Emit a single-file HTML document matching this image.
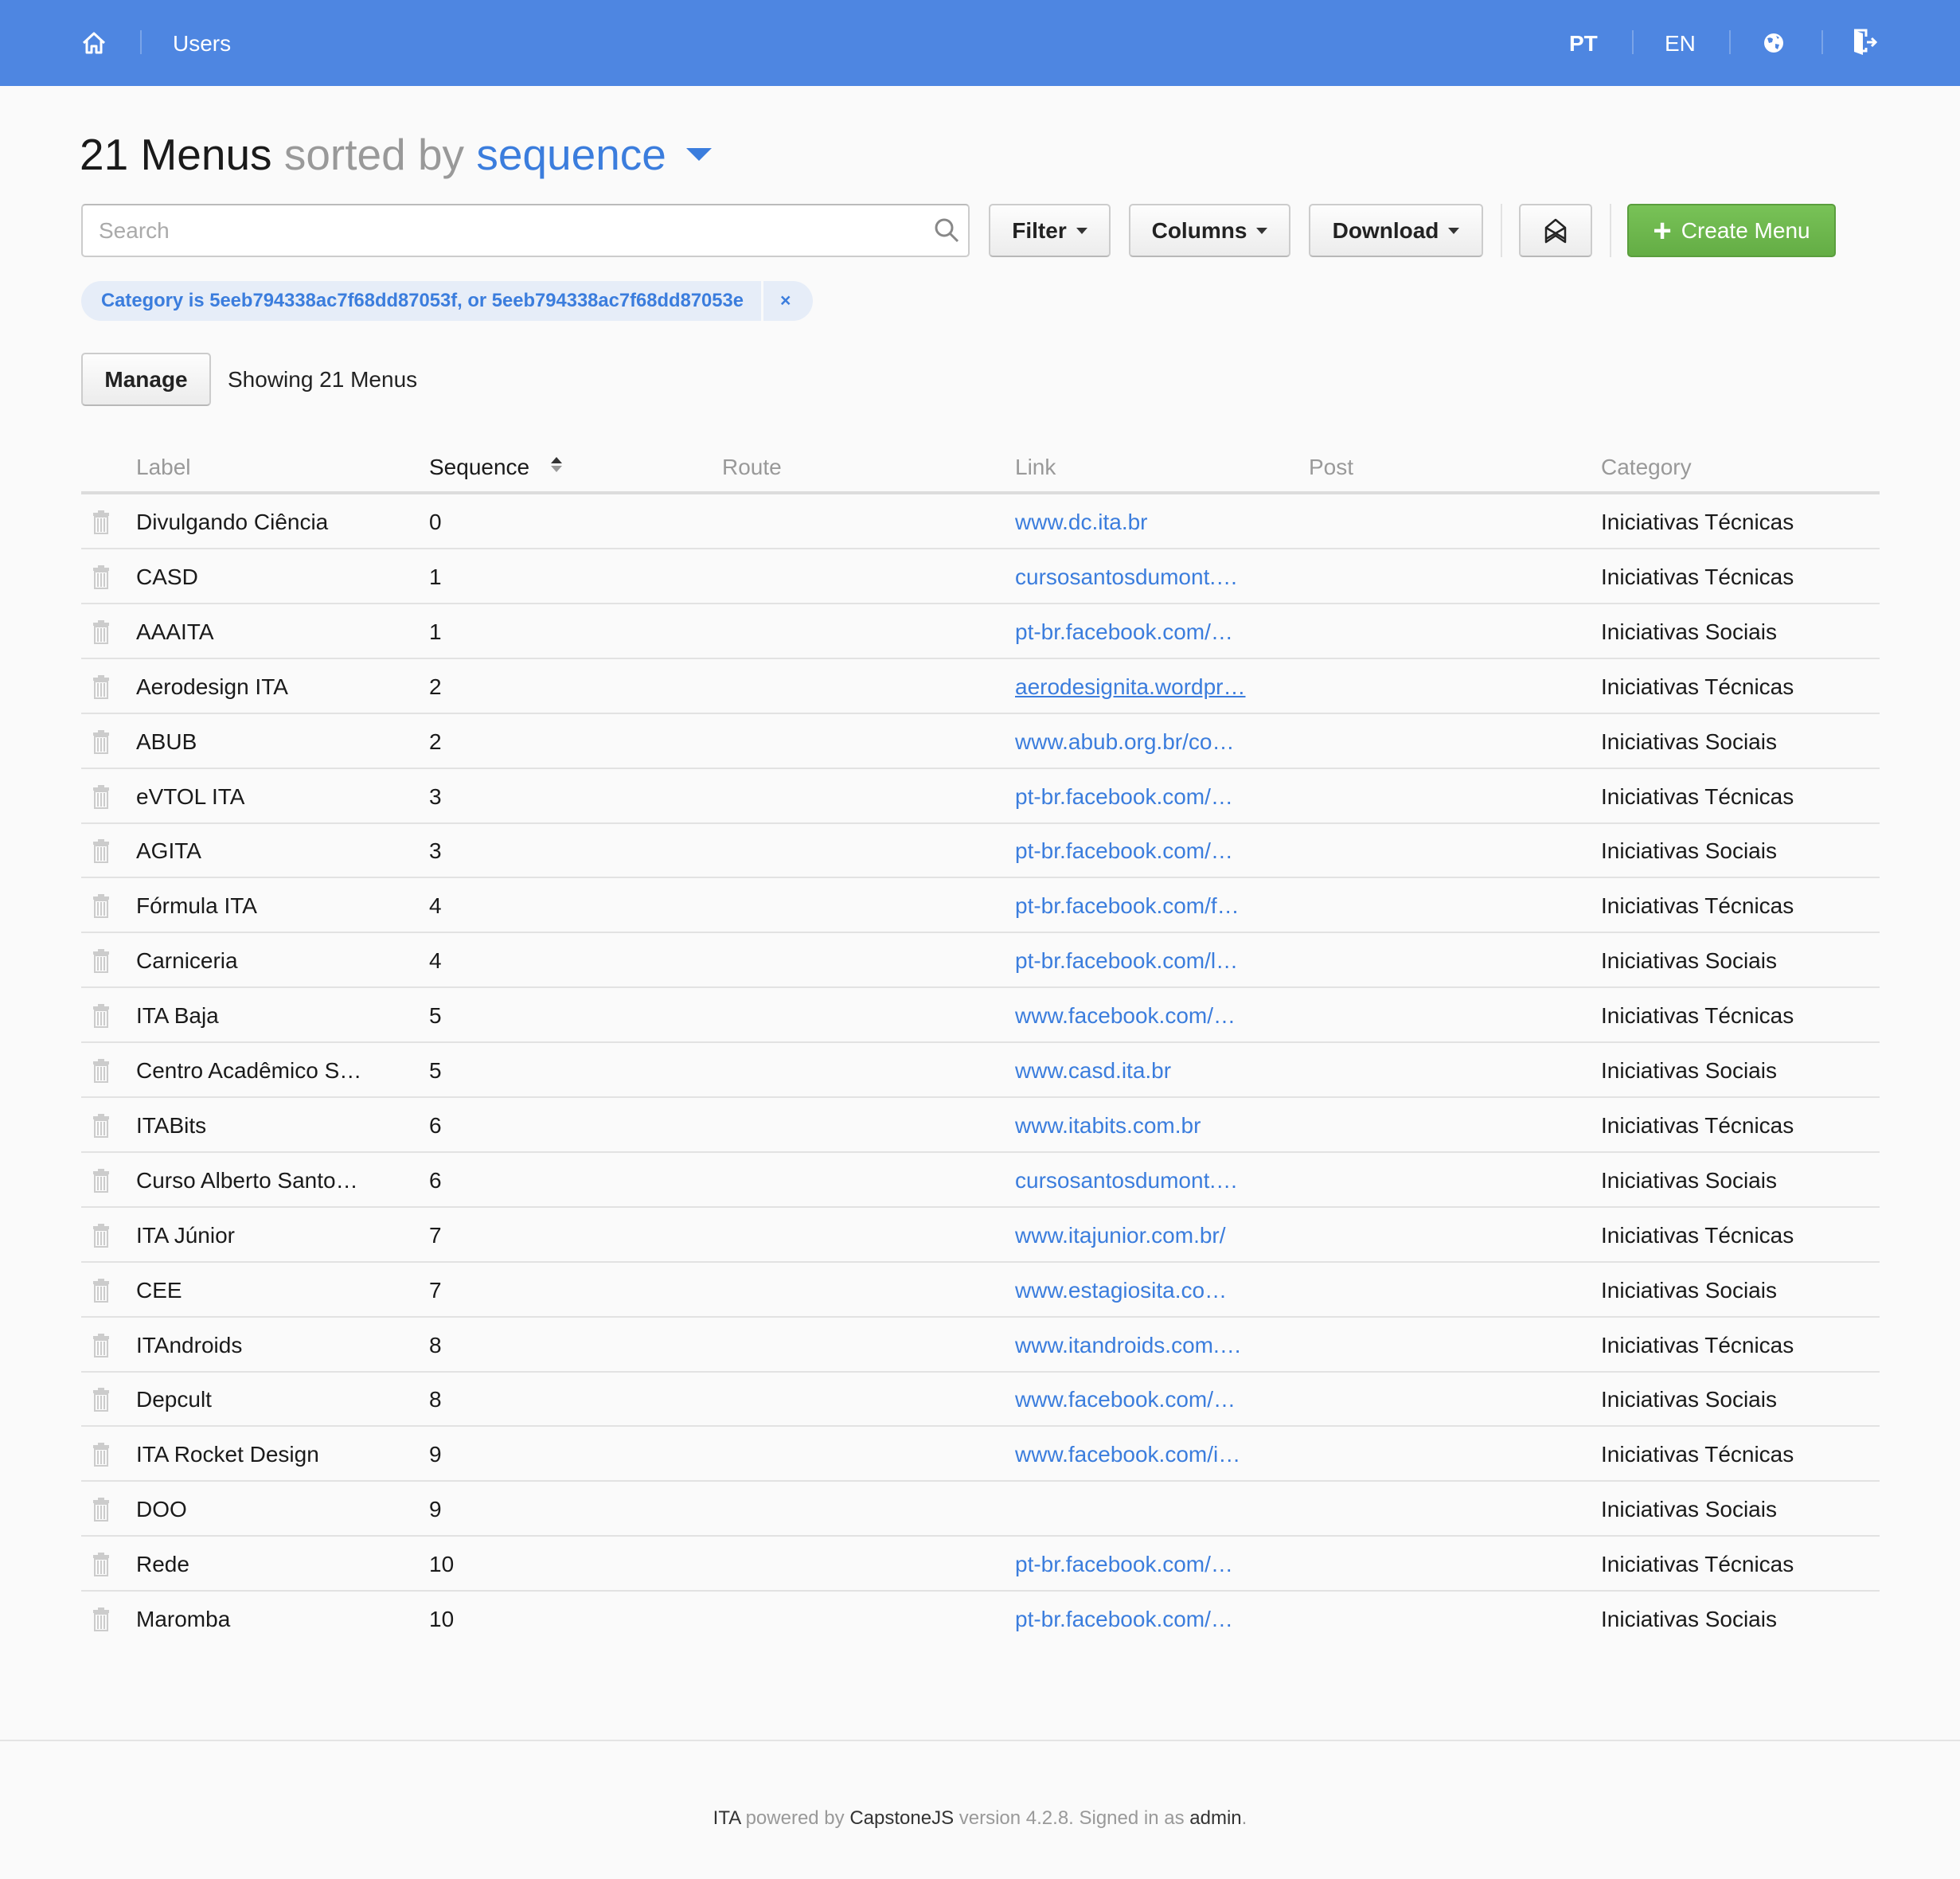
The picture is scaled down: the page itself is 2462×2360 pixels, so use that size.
<!DOCTYPE html>
<html><head><meta charset="utf-8"><style>
*{box-sizing:border-box;margin:0;padding:0}
body{width:2462px;height:2360px;background:#fafafa;font-family:"Liberation Sans",sans-serif;color:#1a1a1a;position:relative;overflow:hidden}
.a{position:absolute}
.hdr{left:0;top:0;width:2462px;height:108px;background:#4e86e1}
.hw{color:#fff;font-size:28px;top:39px}
.sep{top:38px;width:2px;height:30px;background:rgba(255,255,255,.25)}
.btn{top:256px;height:67px;border:2px solid #ccc;border-bottom-color:#b8b8b8;border-radius:5px;background:linear-gradient(#fdfdfd,#ececec);font-size:28px;font-weight:bold;color:#222;display:flex;align-items:center;justify-content:center;gap:12px}
.car{display:inline-block;border-left:7px solid transparent;border-right:7px solid transparent;border-top:8px solid #333}
.row{position:absolute;left:102px;width:2259px;height:69px;border-bottom:2px solid #e2e2e2;font-size:28px}
.row span{position:absolute;top:19px;white-space:nowrap}
.l{left:69px}.s{left:437px}.k{left:1173px;color:#3b7ddd}.c{left:1909px}
.th{top:571px;font-size:28px;color:#999}
</style></head><body>
<div class="a hdr"></div>
<svg class="a" style="left:102px;top:38px" width="32" height="32" viewBox="0 0 32 32"><path d="M3 16 L16 4 L29 16 M7 13 V28 H13 V20 H19 V28 H25 V13" fill="none" stroke="#fff" stroke-width="3" stroke-linejoin="round"/></svg>
<div class="a sep" style="left:176px"></div>
<div class="a hw" style="left:217px">Users</div>
<div class="a hw" style="left:1971px;font-weight:bold">PT</div>
<div class="a sep" style="left:2050px"></div>
<div class="a hw" style="left:2091px">EN</div>
<div class="a sep" style="left:2172px"></div>
<svg class="a" style="left:2215px;top:41px" width="26" height="26" viewBox="0 0 26 26"><circle cx="13" cy="13" r="12" fill="#fff"/><path d="M5 7 Q9 5 12 8 L11 12 L7 13 Z M15 14 L20 15 L18 21 L15 19 Z M16 4 L20 6 L18 8 Z" fill="#4e86e1"/></svg>
<div class="a sep" style="left:2288px"></div>
<svg class="a" style="left:2326px;top:36px" width="34" height="34" viewBox="0 0 34 34"><path d="M3 2 H18 V10 M18 24 V28 H14" fill="none" stroke="#fff" stroke-width="3"/><path d="M3 2 L14 6 V33 L3 29 Z" fill="#fff"/><path d="M19 17 H29 M25 12 L30 17 L25 22" fill="none" stroke="#fff" stroke-width="3"/></svg>

<div class="a" style="left:100px;top:162px;font-size:55px;white-space:nowrap">21 Menus <span style="color:#999">sorted by</span> <span style="color:#3b7ddd">sequence</span></div>
<div class="a" style="left:862px;top:186px;border-left:16px solid transparent;border-right:16px solid transparent;border-top:16px solid #3b7ddd"></div>

<div class="a" style="left:102px;top:256px;width:1116px;height:67px;border:2px solid #ccc;border-top-color:#bbb;border-radius:5px;background:#fff"></div>
<div class="a" style="left:124px;top:274px;font-size:28px;color:#aaa">Search</div>
<svg class="a" style="left:1172px;top:272px" width="34" height="34" viewBox="0 0 34 34"><circle cx="14" cy="14" r="10" fill="none" stroke="#888" stroke-width="3"/><path d="M21 21 L31 31" stroke="#888" stroke-width="3"/></svg>
<div class="a btn" style="left:1242px;width:153px">Filter <i class="car"></i></div>
<div class="a btn" style="left:1418px;width:203px">Columns <i class="car"></i></div>
<div class="a btn" style="left:1644px;width:219px">Download <i class="car"></i></div>
<div class="a" style="left:1885px;top:256px;width:2px;height:67px;background:#e2e2e2"></div>
<div class="a btn" style="left:1908px;width:92px"><svg width="32" height="32" viewBox="0 0 32 32"><path d="M16 2 L28 12 V30 L16 22 L4 30 V12 Z M4 12 L28 26 M28 12 L4 26" fill="none" stroke="#222" stroke-width="2.5" stroke-linejoin="round"/></svg></div>
<div class="a" style="left:2022px;top:256px;width:2px;height:67px;background:#e2e2e2"></div>
<div class="a btn" style="left:2044px;width:262px;background:linear-gradient(#78c257,#64ad45);border-color:#5a9e3d;color:#fff;font-weight:normal"><span style="font-size:40px;font-weight:bold;line-height:1">+</span>Create Menu</div>

<div class="a" style="left:102px;top:353px;width:919px;height:50px;border-radius:25px;background:#e6edf8"></div>
<div class="a" style="left:956px;top:353px;width:3px;height:50px;background:#fafafa"></div>
<div class="a" style="left:127px;top:364px;font-size:23.8px;font-weight:bold;color:#3b7ddd;white-space:nowrap">Category is 5eeb794338ac7f68dd87053f, or 5eeb794338ac7f68dd87053e</div>
<div class="a" style="left:980px;top:364px;font-size:23px;font-weight:bold;color:#3b7ddd">×</div>

<div class="a btn" style="left:102px;top:443px;width:163px;height:67px">Manage</div>
<div class="a" style="left:286px;top:461px;font-size:28px;color:#222">Showing 21 Menus</div>

<div class="a th" style="left:171px">Label</div>
<div class="a th" style="left:539px;color:#1a1a1a">Sequence</div>
<div class="a" style="left:692px;top:574px;border-left:7px solid transparent;border-right:7px solid transparent;border-bottom:8px solid #333"></div>
<div class="a" style="left:692px;top:585px;border-left:7px solid transparent;border-right:7px solid transparent;border-top:8px solid #999"></div>
<div class="a th" style="left:907px">Route</div>
<div class="a th" style="left:1275px">Link</div>
<div class="a th" style="left:1644px">Post</div>
<div class="a th" style="left:2011px">Category</div>
<div class="a" style="left:102px;top:617px;width:2259px;height:4px;background:#dcdcdc"></div>

<div id="rows"></div>
<script>
var d=[["Divulgando Ciência","0","www.dc.ita.br","T"],["CASD","1","cursosantosdumont.…","T"],["AAAITA","1","pt-br.facebook.com/…","S"],["Aerodesign ITA","2","aerodesignita.wordpr…","T"],["ABUB","2","www.abub.org.br/co…","S"],["eVTOL ITA","3","pt-br.facebook.com/…","T"],["AGITA","3","pt-br.facebook.com/…","S"],["Fórmula ITA","4","pt-br.facebook.com/f…","T"],["Carniceria","4","pt-br.facebook.com/l…","S"],["ITA Baja","5","www.facebook.com/…","T"],["Centro Acadêmico S…","5","www.casd.ita.br","S"],["ITABits","6","www.itabits.com.br","T"],["Curso Alberto Santo…","6","cursosantosdumont.…","S"],["ITA Júnior","7","www.itajunior.com.br/","T"],["CEE","7","www.estagiosita.co…","S"],["ITAndroids","8","www.itandroids.com.…","T"],["Depcult","8","www.facebook.com/…","S"],["ITA Rocket Design","9","www.facebook.com/i…","T"],["DOO","9","","S"],["Rede","10","pt-br.facebook.com/…","T"],["Maromba","10","pt-br.facebook.com/…","S"]];
var h="",tr='<svg style="position:absolute;left:14px;top:20px" width="22" height="30" viewBox="0 0 22 30"><rect x="7" y="0" width="8" height="3" fill="#ccc"/><rect x="1" y="3" width="20" height="4" fill="#ccc"/><path d="M3 8 H19 V29 H3 Z M7 10 V27 M11 10 V27 M15 10 V27" fill="none" stroke="#ccc" stroke-width="2"/></svg>';
d.forEach(function(r,i){h+='<div class="row" style="top:'+(621+i*68.9)+'px'+(i==20?';border-bottom:none':'')+'">'+tr+'<span class="l">'+r[0]+'</span><span class="s">'+r[1]+'</span><span class="k"'+(i==3?' style="text-decoration:underline"':'')+'>'+r[2]+'</span><span class="c">Iniciativas '+(r[3]=="T"?"Técnicas":"Sociais")+'</span></div>';});
document.getElementById("rows").innerHTML=h;
</script>
<div class="a" style="left:0;top:2185px;width:2462px;height:2px;background:#e4e4e4"></div>
<div class="a" style="left:0;top:2270px;width:2462px;text-align:center;font-size:24px;color:#999">
<span style="color:#333">ITA</span> powered by <span style="color:#333">CapstoneJS</span> version 4.2.8. Signed in as <span style="color:#333">admin</span>.</div>
</body></html>
